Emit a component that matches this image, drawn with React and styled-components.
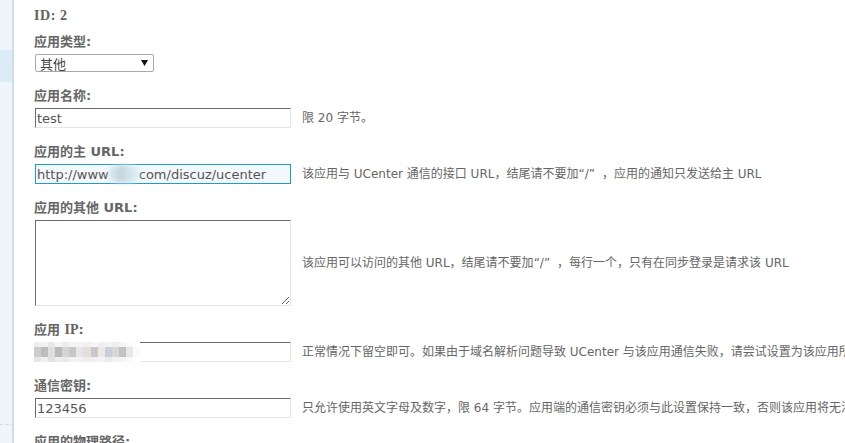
import React from "react";
import styled, { createGlobalStyle } from "styled-components";

// pixelated IP mask, three rows of 15 cells
const MOSAIC = [
  ["#eeeeee", "#f2f2f2", "#e8e8e8", "#f5f5f5", "#ececec", "#f4f4f4", "#f4f4f4", "#f0f0f0", "#f6f6f6", "#efefef", "#f3f3f3", "#eeeeee", "#f5f5f5", "#fbfbfb", "#ffffff"],
  ["#cdcdcd", "#bdbdbd", "#dedede", "#b9b9b9", "#d4d4d4", "#c8c8c8", "#e6e6e6", "#e2dfda", "#c8c8c8", "#ebe9e3", "#c9ced8", "#d8d8d8", "#c2c2c2", "#e8e8e8", "#fbfbfb"],
  ["#e6e6e6", "#f0f0f0", "#e2e2e2", "#ededed", "#e9e9e9", "#f1f1f1", "#f2f2f2", "#eeeeee", "#f0f0f0", "#f3f3f3", "#ebebeb", "#f2f2f2", "#f4f4f4", "#fafafa", "#ffffff"],
];

const GlobalStyle = createGlobalStyle`
  html, body {
    margin: 0;
    padding: 0;
    background: #fff;
    overflow: hidden;
  }
  body {
    font-family: "DejaVu Sans", "Noto Sans CJK SC", sans-serif;
    font-size: 12px;
    color: #666;
  }
`;

const App = () => {
  return (
    <Page>
      <GlobalStyle />
      <Sidebar>
        <SideActive />
        <SideRest />
      </Sidebar>
      <Main>
        <IdLine>ID: 2</IdLine>
        <Form>
          <Block>
            <Label>应用类型:</Label>
            <Select>
              <span>其他</span>
              <svg width="7" height="6" viewBox="0 0 7 6">
                <path d="M0 0h7L3.5 6z" fill="#111" />
              </svg>
            </Select>
          </Block>

          <Block>
            <Label>应用名称:</Label>
            <FieldRow>
              <TextInput readOnly value="test" />
              <Hint>限 20 字节。</Hint>
            </FieldRow>
          </Block>

          <Block>
            <Label>应用的主 URL:</Label>
            <FieldRow>
              <FakeInput $focused>
                http://www<Smudge />com/discuz/ucenter
              </FakeInput>
              <Hint>
                该应用与 UCenter 通信的接口 URL，结尾请不要加<Quote>“/”</Quote>，应用的通知只发送给主 URL
              </Hint>
            </FieldRow>
          </Block>

          <Block>
            <Label>应用的其他 URL:</Label>
            <FieldRow>
              <TextArea readOnly />
              <Hint>
                该应用可以访问的其他 URL，结尾请不要加<Quote>“/”</Quote>，每行一个，只有在同步登录是请求该 URL
              </Hint>
            </FieldRow>
          </Block>

          <Block>
            <Label>
              应用 <SerifPart>IP</SerifPart>:
            </Label>
            <FieldRow>
              <MaskedField>
                <TextInput readOnly value="" />
                <Mosaic>
                  {MOSAIC.flat().map((c, i) => (
                    <Cell key={i} style={{ background: c }} />
                  ))}
                </Mosaic>
              </MaskedField>
              <Hint>正常情况下留空即可。如果由于域名解析问题导致 UCenter 与该应用通信失败，请尝试设置为该应用所在服务器的 IP 地址。</Hint>
            </FieldRow>
          </Block>

          <Block>
            <Label>通信密钥:</Label>
            <FieldRow>
              <TextInput readOnly value="123456" />
              <Hint>只允许使用英文字母及数字，限 64 字节。应用端的通信密钥必须与此设置保持一致，否则该应用将无法与 UCenter 正常通信。</Hint>
            </FieldRow>
          </Block>

          <Block>
            <Label>应用的物理路径:</Label>
          </Block>
        </Form>
      </Main>
    </Page>
  );
};

export default App;

const Page = styled.div`
  display: flex;
  width: 845px;
  height: 443px;
  overflow: hidden;
`;

const Sidebar = styled.div`
  flex: 0 0 12px;
  display: flex;
  flex-direction: column;
  padding-top: 50px;
  background: #eef6fb;
  border-right: 2px solid #c9deee;
`;

const SideActive = styled.div`
  height: 32px;
  background: #dcecf7;
`;

const SideRest = styled.div`
  height: 342px;
  border-bottom: 1px dashed #d9d4d6;
  margin-right: -2px;
`;

const Main = styled.div`
  flex: 1;
  min-width: 0;
  padding: 8px 0 0 20px;
  white-space: nowrap;
`;

const IdLine = styled.div`
  font-family: "Liberation Serif", serif;
  font-weight: bold;
  font-size: 14px;
  letter-spacing: 0.6px;
  line-height: 16px;
  color: #67615b;
  margin-bottom: 10px;
`;

const Form = styled.div`
  display: flex;
  flex-direction: column;
  gap: 16px;
`;

const Block = styled.div`
  display: flex;
  flex-direction: column;
  align-items: flex-start;
`;

const Label = styled.div`
  font-weight: bold;
  font-size: 13px;
  line-height: 16px;
  color: #666;
  margin-bottom: 4px;
`;

const SerifPart = styled.span`
  font-family: "Liberation Serif", serif;
  font-size: 14px;
  color: #67615b;
`;

const FieldRow = styled.div`
  display: flex;
  align-items: center;
  gap: 11px;
  margin-left: 1px;
`;

const Select = styled.div`
  box-sizing: border-box;
  width: 119px;
  height: 18px;
  margin-left: 1px;
  display: flex;
  align-items: center;
  justify-content: space-between;
  padding: 0 5px 0 4px;
  border: 1px solid #a8a8a8;
  border-radius: 2px;
  background: #fff;
  font-size: 13px;
  color: #444;
`;

const inputLook = `
  box-sizing: border-box;
  width: 256px;
  border: 1px solid;
  border-color: #6b6b6b #e6e6e6 #e6e6e6 #6b6b6b;
  background: #fff;
  font-family: "DejaVu Sans", "Noto Sans CJK SC", sans-serif;
  font-size: 13px;
  color: #555;
  outline: none;
  margin: 0;
`;

const TextInput = styled.input`
  ${inputLook}
  height: 20px;
  padding: 0 1px;
`;

const FakeInput = styled.div`
  ${inputLook}
  height: 20px;
  padding: 0 1px;
  display: flex;
  align-items: center;
  border-color: ${(p) => (p.$focused ? "#1b9dd1" : "#6b6b6b #e6e6e6 #e6e6e6 #6b6b6b")};
  background: ${(p) => (p.$focused ? "#f3f8fc" : "#fff")};
`;

const Smudge = styled.span`
  display: inline-block;
  width: 30px;
  height: 18px;
  border-radius: 40%;
  background: linear-gradient(90deg, #d9e9f2, #c6d3dc 40%, #d3e6f1 70%, #dcedf6);
  filter: blur(2px);
`;

const TextArea = styled.textarea`
  ${inputLook}
  height: 86px;
  padding: 1px;
  resize: both;
`;

const MaskedField = styled.div`
  position: relative;
`;

const Mosaic = styled.div`
  position: absolute;
  left: -1px;
  top: 0;
  width: 106px;
  height: 20px;
  display: grid;
  grid-template-columns: repeat(15, 1fr);
  grid-template-rows: 5px 10px 5px;
  filter: blur(0.7px);
`;

const Cell = styled.span`
  display: block;
`;

const Hint = styled.div`
  font-size: 12px;
  line-height: 16px;
  color: #666;
  white-space: nowrap;
`;

const Quote = styled.span`
  padding-right: 7px;
`;
